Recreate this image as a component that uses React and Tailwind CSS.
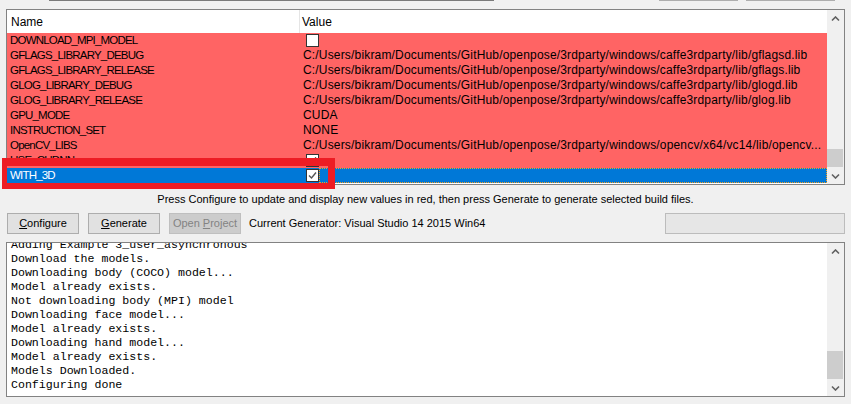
import React from "react";

const ROWS = [
  { name: "DOWNLOAD_MPI_MODEL", check: false },
  { name: "GFLAGS_LIBRARY_DEBUG", value: "C:/Users/bikram/Documents/GitHub/openpose/3rdparty/windows/caffe3rdparty/lib/gflagsd.lib" },
  { name: "GFLAGS_LIBRARY_RELEASE", value: "C:/Users/bikram/Documents/GitHub/openpose/3rdparty/windows/caffe3rdparty/lib/gflags.lib" },
  { name: "GLOG_LIBRARY_DEBUG", value: "C:/Users/bikram/Documents/GitHub/openpose/3rdparty/windows/caffe3rdparty/lib/glogd.lib" },
  { name: "GLOG_LIBRARY_RELEASE", value: "C:/Users/bikram/Documents/GitHub/openpose/3rdparty/windows/caffe3rdparty/lib/glog.lib" },
  { name: "GPU_MODE", value: "CUDA" },
  { name: "INSTRUCTION_SET", value: "NONE" },
  { name: "OpenCV_LIBS", value: "C:/Users/bikram/Documents/GitHub/openpose/3rdparty/windows/opencv/x64/vc14/lib/opencv..." },
  { name: "USE_CUDNN", check: true },
];

const LOG = [
  "Adding Example 3_user_asynchronous",
  "Download the models.",
  "Downloading body (COCO) model...",
  "Model already exists.",
  "Not downloading body (MPI) model",
  "Downloading face model...",
  "Model already exists.",
  "Downloading hand model...",
  "Model already exists.",
  "Models Downloaded.",
  "Configuring done",
];

function CheckBox({ checked, tick = "#333" }) {
  return (
    <div className="w-[13px] h-[13px] border border-[#333] bg-white flex items-center justify-center shrink-0">
      {checked && (
        <svg width="11" height="11" viewBox="0 0 11 11">
          <path d="M2 5.5 L4.5 8 L9 2.5" fill="none" stroke={tick} strokeWidth="1.4" />
        </svg>
      )}
    </div>
  );
}

function Chevron({ down }) {
  return (
    <svg width="9" height="6" viewBox="0 0 9 6">
      <path d={down ? "M1 1.5 L4.5 5 L8 1.5" : "M1 4.5 L4.5 1 L8 4.5"} fill="none" stroke="#606060" strokeWidth="1.6" />
    </svg>
  );
}

// vertical scrollbar, thumb sits right above the down arrow
function ScrollBar({ thumb }) {
  return (
    <div className="w-[17px] bg-[#f0f0f0] flex flex-col shrink-0">
      <div className="h-[17px] flex items-center justify-center">
        <Chevron />
      </div>
      <div className="flex-1 flex flex-col justify-end">
        <div className="bg-[#cdcdcd] mr-[1px]" style={{ height: thumb }} />
      </div>
      <div className="h-[17px] flex items-center justify-center">
        <Chevron down />
      </div>
    </div>
  );
}

function Button({ children, disabled }) {
  return (
    <div
      className={
        disabled
          ? "w-[72px] h-[21px] border border-[#bfbfbf] bg-[#cccccc] text-[#838383] flex items-center justify-center whitespace-nowrap"
          : "w-[72px] h-[21px] border border-[#adadad] bg-[#e1e1e1] text-black flex items-center justify-center whitespace-nowrap"
      }
    >
      {children}
    </div>
  );
}

export default function App() {
  return (
    <div
      className="relative w-[851px] h-[404px] overflow-hidden bg-[#f0f0f0] text-[12px] text-black"
      style={{ fontFamily: '"Liberation Sans", Arial, sans-serif' }}
    >
      {/* bottoms of the widgets above */}
      <div className="flex h-[9px]">
        <div className="ml-[49px] w-[445px] h-px bg-[#7a7a7a]" />
        <div className="ml-[165px] w-[79px] h-px bg-[#adadad]" />
        <div className="ml-[8px] w-[89px] h-px bg-[#adadad]" />
      </div>

      {/* cache table */}
      <div className="mx-[6px] h-[176px] border border-[#828282] bg-white flex">
        <div className="flex-1 flex flex-col overflow-hidden">
          <div className="h-[23px] flex items-center shrink-0">
            <div className="w-[293px] pl-[4px] border-r border-[#e5e5e5] h-full flex items-center">Name</div>
            <div className="pl-[2px]">Value</div>
          </div>
          {ROWS.map((r) => (
            <div key={r.name} className="h-[15px] flex items-center bg-[#ff6464] shrink-0 leading-[15px]">
              <div className="w-[294px] pl-[3px] whitespace-nowrap text-[11.5px] tracking-[-0.8px]">{r.name}</div>
              <div className="flex-1 pl-[2px] whitespace-nowrap overflow-hidden tracking-[0.17px]">
                {r.value !== undefined ? r.value : <div className="ml-[3px]"><CheckBox checked={r.check} /></div>}
              </div>
            </div>
          ))}
          <div className="h-[15px] flex items-center bg-[#0078d7] text-white shrink-0 leading-[15px]">
            <div className="w-[294px] pl-[3px] text-[11.5px] tracking-[-0.8px]">WITH_3D</div>
            <div className="flex-1 flex h-full items-center pl-[5px]">
              <CheckBox checked tick="#555" />
              <div className="flex-1 h-full border border-dotted border-[#f7a01f]" />
            </div>
          </div>
        </div>
        <ScrollBar thumb={18} />
      </div>

      <div className="h-[28px] flex items-center justify-center text-[11px]">
        Press Configure to update and display new values in red, then press Generate to generate selected build files.
      </div>

      <div className="flex items-center h-[21px] text-[11px]">
        <div className="ml-[7px] flex gap-[9px]">
          <Button><span><u>C</u>onfigure</span></Button>
          <Button><span><u>G</u>enerate</span></Button>
          <Button disabled><span>Open <u>P</u>roject</span></Button>
        </div>
        <div className="ml-[8px]">Current Generator: Visual Studio 14 2015 Win64</div>
        <div className="ml-auto mr-[6px] w-[180px] h-[21px] border border-[#bcbcbc] bg-[#e6e6e6]" />
      </div>

      {/* output log */}
      <div className="mx-[6px] mt-[8px] h-[155px] border border-[#828282] bg-white flex">
        <div
          className="flex-1 overflow-hidden pl-[4px] text-[11.6px] leading-[14px] text-black"
          style={{ fontFamily: '"Liberation Mono", "Courier New", monospace' }}
        >
          <div className="-mt-[5px]">
            {LOG.map((l, i) => (
              <div key={i} className="whitespace-pre h-[14px]">{l}</div>
            ))}
          </div>
        </div>
        <ScrollBar thumb={28} />
      </div>

      {/* red annotation box */}
      <div className="absolute left-[2px] top-[158px] w-[333px] h-[31px] border-t-[8px] border-l-[5px] border-r-[7px] border-b-[6px] border-[#ed1c24]" />
    </div>
  );
}
